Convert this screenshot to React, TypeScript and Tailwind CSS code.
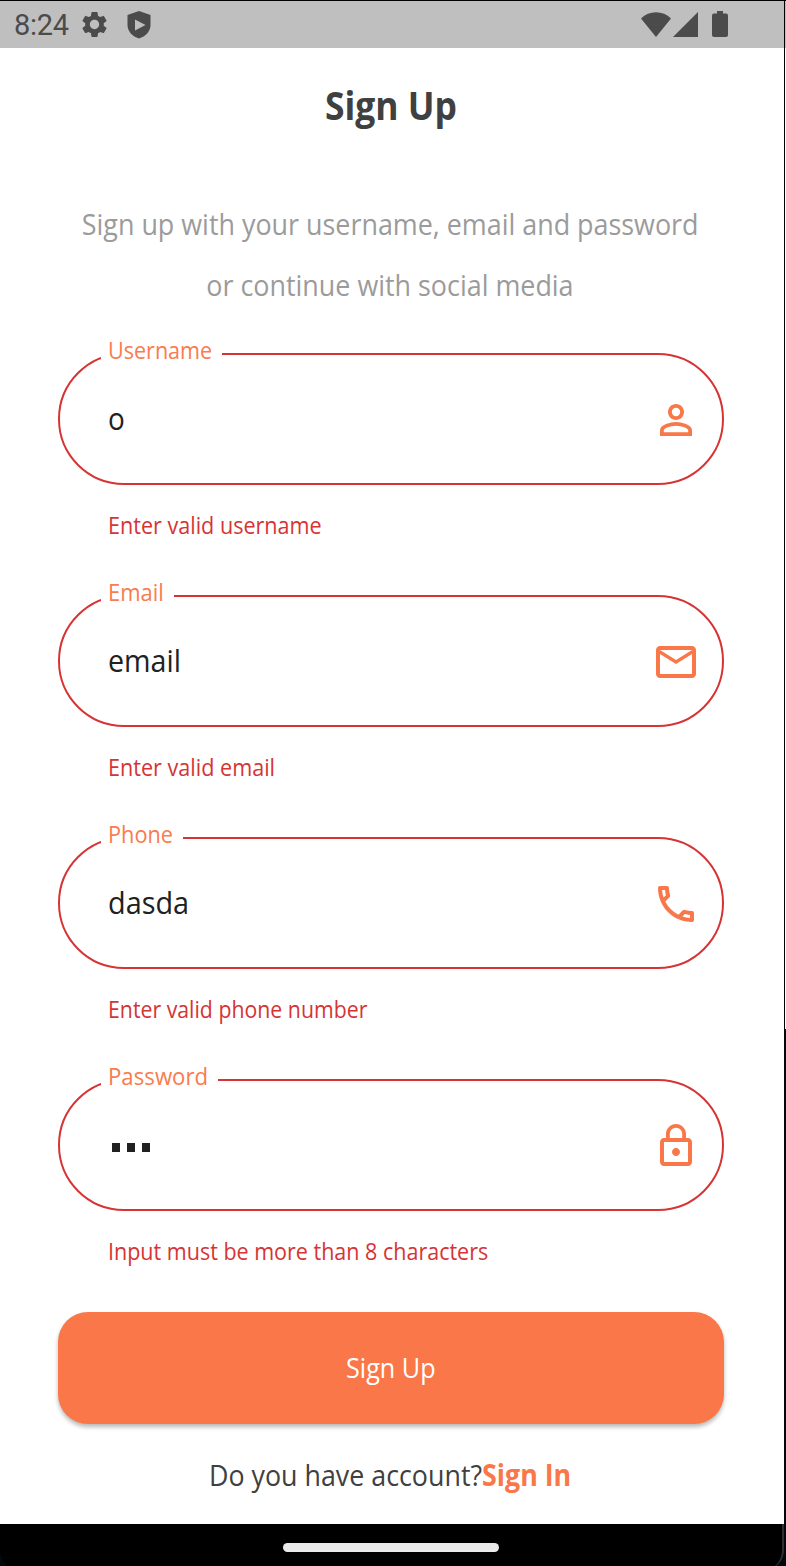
import React from "react";
import {
  MdPersonOutline,
  MdMailOutline,
  MdOutlineLocalPhone,
  MdLockOutline,
  MdSettings,
} from "react-icons/md";

type FieldProps = {
  label: string;
  labelClass: string;
  notchClass: string;
  error: string;
  errorClass: string;
  icon: React.ReactNode;
  children: React.ReactNode;
};

function Field({ label, labelClass, notchClass, error, errorClass, icon, children }: FieldProps) {
  return (
    <div className="h-[242.12px]">
      <div className="relative flex h-[132px] items-center justify-between rounded-full border-2 border-[#d63434] pl-12 pr-[22px]">
        <div className={`absolute -top-[19px] left-[41px] h-[28px] bg-white pl-[7px] text-[24px] leading-[28px] text-[#fa7b4e] ${notchClass}`}>
          <span className={`block w-max origin-left whitespace-nowrap ${labelClass}`}>{label}</span>
        </div>
        <div className="-mt-[3px] text-[31px] leading-[40px] text-[#212121]">{children}</div>
        <span className="pt-px text-5xl text-[#f97748]">{icon}</span>
      </div>
      <p className="mt-[24px] pl-[50px] text-[24px] leading-[32px] text-[#d63434]">
        <span className={`block w-max origin-left whitespace-nowrap ${errorClass}`}>{error}</span>
      </p>
    </div>
  );
}

function StatusBar() {
  return (
    <header className="flex h-12 items-center justify-between border-t border-black bg-[#bfbfbf] pl-[14px] pr-[58px] text-[#4b4b4b]">
      <div className="flex items-center">
        <span className="w-[65px] pt-[2px] font-[Roboto] text-[29px] leading-none tracking-[-0.3px]">8:24</span>
        <MdSettings className="size-[31px]" />
        <svg className="ml-[17px] h-[28px] w-[24px]" viewBox="0 0 24 28" fill="currentColor">
          <path fillRule="evenodd" d="M12 0 23.5 4V14C23.5 20.5 18.5 25.5 12 27.5 5.500 25.500 .5 20.500.5 14V4ZM8 8.500V19.500L18.500 14Z" />
        </svg>
      </div>
      <div className="-mt-px flex items-center">
        <svg className="h-[25px] w-[30px]" viewBox="0 0 30 25" fill="currentColor">
          <path d="M0 6.500C8-2 22-2 30 6.500L15 25Z" />
        </svg>
        <svg className="ml-[2px] h-[25px] w-[25px]" viewBox="0 0 25 25" fill="currentColor">
          <path d="M25 0V25H0Z" />
        </svg>
        <svg className="ml-[14px] h-[26px] w-[16px]" viewBox="0 0 16 26" fill="currentColor">
          <path d="M5 0H11V2.500H14Q16 2.500 16 4.500V24Q16 26 14 26H2Q0 26 0 24V4.500Q0 2.500 2 2.500H5Z" />
        </svg>
      </div>
    </header>
  );
}

export default function App() {
  return (
    <div className="relative flex h-[1566px] w-[786px] flex-col overflow-hidden bg-white font-['Open_Sans',sans-serif]">
      <StatusBar />
      <main className="flex h-[1476px] flex-col pl-[58px] pr-[62px]">
        <h1 className="mt-[31px] scale-x-[0.908] text-center text-[39px] font-bold leading-[52px] text-[#404040]">Sign Up</h1>
        <div className="mt-[62px] flex flex-col items-center whitespace-nowrap pr-[2px] text-[30px] leading-[61px] text-[#9b9b9b]">
          <p className="scale-x-[0.896]">Sign up with your username, email and password</p>
          <p className="scale-x-[0.896]">or continue with social media</p>
        </div>
        <form className="mt-[38px]">
          <Field label="Username" labelClass="scale-x-[0.898]" notchClass="w-[121px]" error="Enter valid username" errorClass="scale-x-[0.899]" icon={<MdPersonOutline />}>
            <span className="block origin-left scale-x-[0.9]">o</span>
          </Field>
          <Field label="Email" labelClass="scale-x-[0.915]" notchClass="w-[73px]" error="Enter valid email" errorClass="scale-x-[0.9]" icon={<MdMailOutline />}>
            <span className="block origin-left scale-x-[0.924]">email</span>
          </Field>
          <Field label="Phone" labelClass="scale-x-[0.905]" notchClass="w-[82px]" error="Enter valid phone number" errorClass="scale-x-[0.887]" icon={<MdOutlineLocalPhone />}>
            <span className="block origin-left scale-x-[0.931]">dasda</span>
          </Field>
          <Field label="Password" labelClass="scale-x-[0.926]" notchClass="w-[117px]" error="Input must be more than 8 characters" errorClass="scale-x-[0.896]" icon={<MdLockOutline />}>
            <span className="flex gap-[7px] pl-[4px] pt-[8px]">
              <i className="h-[9px] w-[8px] bg-[#212121]" />
              <i className="h-[9px] w-[8px] bg-[#212121]" />
              <i className="h-[9px] w-[8px] bg-[#212121]" />
            </span>
          </Field>
        </form>
        <button className="-mt-[9.480px] h-[112px] w-full shrink-0 rounded-[30px] bg-[#f97748] pb-[2px] text-[28px] text-white shadow-[0_3px_4px_rgba(0,0,0,0.28)]">
          <span className="inline-block scale-x-[0.899]">Sign Up</span>
        </button>
        <p className="mt-[31px] scale-x-[0.894] whitespace-nowrap pr-[2px] text-center text-[30px] leading-[40px] text-[#404040]">
          <span>Do you have account?</span>
          <b className="text-[#f97748]">Sign In</b>
        </p>
      </main>
      <footer className="h-[42px] bg-[#02090c]">
        <div className="flex h-[46px] w-[784px] items-start justify-center rounded-b-[20px] border-r-2 border-[#303030] bg-black pt-[19px]">
          <div className="h-[9px] w-[216px] rounded-full bg-[#ebebeb]" />
        </div>
      </footer>
      <div className="absolute left-[784px] top-0 h-[1029px] w-px bg-black" />
      <div className="absolute left-[784px] top-[1029px] h-[537px] w-[2px] bg-[#02090c]" />
    </div>
  );
}
